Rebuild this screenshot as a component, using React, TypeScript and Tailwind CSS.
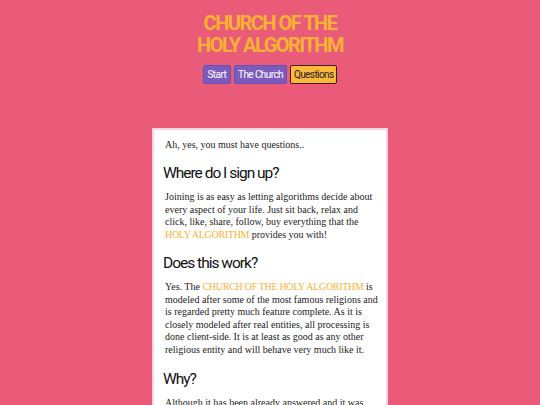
import React from "react";

const serif = { fontFamily: '"Liberation Serif", "DejaVu Serif", serif' };

function Hl({ children }: { children: React.ReactNode }) {
  return <span className="text-[#f9b233] tracking-[-0.3px]">{children}</span>;
}

export default function App() {
  return (
    <div className="w-[540px] h-[405px] overflow-hidden bg-[#e95b78] flex flex-col items-center font-['Roboto',sans-serif]">
      <h1 className="mt-[12px] text-center text-[20px] leading-[22px] font-bold text-[#f9b233] tracking-[-1.5px]">
        CHURCH OF THE
        <br />
        HOLY ALGORITHM
      </h1>
      <nav className="mt-[9px] flex gap-[3px] text-[10px] tracking-[-0.6px]">
        <button className="h-[19px] px-[4px] bg-[#7b5cbe] text-white rounded-[2px] border border-[#6a4fae]">Start</button>
        <button className="h-[19px] px-[3px] bg-[#7b5cbe] text-white rounded-[2px] border border-[#6a4fae]">The Church</button>
        <button className="h-[19px] px-[3px] bg-[#fbb83a] text-[#222] rounded-[2px] border border-[#3a1f1f]">Questions</button>
      </nav>
      <div className="mt-[44px] w-[236px] bg-white border-2 border-[#f7d3dc] pl-[9px] pr-[7px] pt-[8px] pb-4">
        <p className="text-[10px] leading-[13px] text-[#222] pl-[2px]" style={serif}>Ah, yes, you must have questions..</p>
        <h2 className="mt-[12px] text-[15.5px] leading-[20px] text-[#111] tracking-[-1px]">Where do I sign up?</h2>
        <p className="mt-[8px] text-[10px] leading-[12.5px] text-[#222] pl-[2px]" style={serif}>
          Joining is as easy as letting algorithms decide about every aspect of your life. Just sit back, relax and click, like, share, follow, buy everything that the <Hl>HOLY ALGORITHM</Hl> provides you with!
        </p>
        <h2 className="mt-[12px] text-[15.5px] leading-[20px] text-[#111] tracking-[-1px]">Does this work?</h2>
        <p className="mt-[8px] text-[10px] leading-[12.5px] text-[#222] pl-[2px]" style={serif}>
          Yes. The <Hl>CHURCH OF THE HOLY ALGORITHM</Hl> is modeled after some of the most famous religions and is regarded pretty much feature complete. As it is closely modeled after real entities, all processing is done client-side. It is at least as good as any other religious entity and will behave very much like it.
        </p>
        <h2 className="mt-[13px] text-[15.5px] leading-[20px] text-[#111] tracking-[-1px]">Why?</h2>
        <p className="mt-[8px] text-[10px] leading-[12.5px] text-[#222] pl-[2px] pr-[14px]" style={serif}>
          Although it has been already answered and it was not a question, let us explain it once more anyway.
        </p>
      </div>
    </div>
  );
}
